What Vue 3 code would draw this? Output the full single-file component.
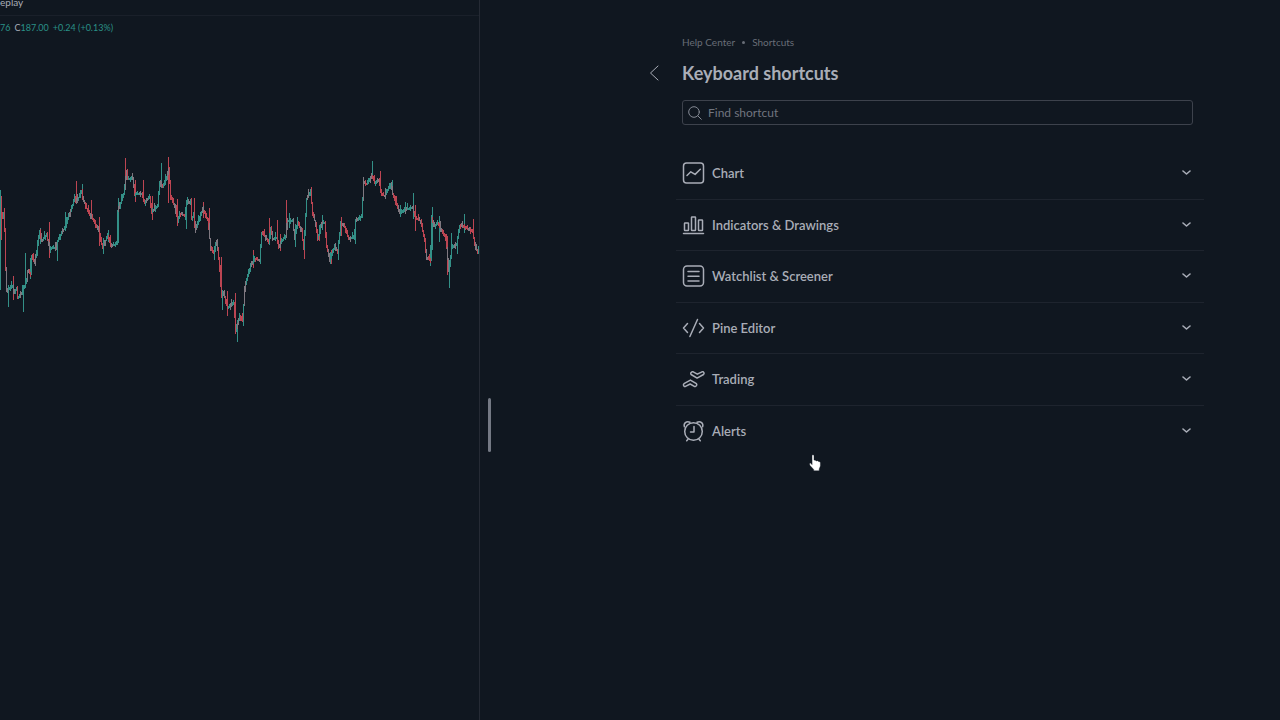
<script setup>
import { ref } from 'vue'

const query = ref('')

const sections = [
  { id: 'chart', label: 'Chart' },
  { id: 'indicators', label: 'Indicators & Drawings' },
  { id: 'watchlist', label: 'Watchlist & Screener' },
  { id: 'pine', label: 'Pine Editor' },
  { id: 'trading', label: 'Trading' },
  { id: 'alerts', label: 'Alerts' }
]

// Price path as x, y pairs
const path = [
  2,214, 3,217, 4,212, 5,230, 6,267, 7,290, 9,287, 13,285, 14,292, 17,288, 18,297, 22,292, 24,287, 27,280,
  28,270, 31,273, 32,256, 35,262, 37,250, 40,230, 42,240, 47,234, 50,248, 52,247, 56,247, 58,240, 63,230,
  66,226, 68,218, 73,204, 75,196, 77,201, 82,190, 83,198, 88,210, 93,218, 99,230, 103,247, 108,235, 112,245,
  117,243, 118,210, 124,193, 127,170, 128,178, 133,178, 135,193, 142,193, 145,202, 150,196, 152,211, 158,205,
  160,181, 163,186, 167,177, 169,168, 171,195, 175,205, 178,220, 180,213, 185,215, 187,202, 191,200, 192,218,
  194,213, 196,228, 200,217, 203,208, 208,219, 211,247, 214,252, 217,240, 219,257, 221,283, 222,296, 224,292,
  228,307, 234,302, 236,330, 240,315, 243,320, 245,287, 247,278, 251,264, 255,258, 260,260, 262,232, 267,238,
  269,242, 271,227, 273,238, 277,237, 279,246, 282,240, 286,235, 288,220, 293,220, 295,238, 298,222, 302,230,
  304,248, 307,198, 311,190, 313,213, 316,223, 318,238, 322,222, 325,222, 327,245, 330,260, 335,245, 338,252,
  341,222, 345,226, 349,238, 354,237, 356,220, 362,215, 364,182, 367,183, 372,175, 375,182, 379,179, 382,194,
  385,195, 391,183, 393,193, 400,212, 407,208, 413,207, 416,218, 421,220, 425,240, 427,258, 431,259, 432,217,
  434,225, 438,222, 442,230, 446,236, 449,270, 452,247, 457,243, 460,225, 467,227, 473,230, 475,243, 478,252
]

// Long wicks: x, high, low, rising
const wicks = [
  [0, 190, 290, 1], [1, 196, 240, 0], [4, 208, 230, 0], [8, 285, 307, 1], [13, 276, 300, 0], [23, 287, 312, 1], [25, 253, 287, 1],
  [30, 258, 279, 1], [37, 240, 256, 1], [40, 228, 244, 1], [49, 222, 258, 0], [57, 240, 261, 1], [65, 212, 231, 1],
  [76, 181, 203, 0], [82, 184, 200, 1], [91, 200, 219, 0], [99, 217, 246, 0], [103, 238, 254, 1], [108, 230, 242, 1],
  [118, 198, 243, 1], [125, 158, 183, 0], [135, 180, 202, 0], [143, 180, 202, 0], [152, 196, 220, 0],
  [161, 163, 188, 1], [168, 157, 203, 0], [177, 199, 226, 0], [186, 200, 229, 1], [194, 198, 228, 0],
  [203, 202, 218, 0], [209, 208, 225, 0], [214, 246, 260, 1], [221, 257, 296, 0], [222, 290, 310, 1],
  [227, 291, 316, 0], [235, 293, 325, 0], [237, 320, 342, 1], [243, 307, 326, 1], [253, 250, 268, 0],
  [260, 253, 262, 1], [269, 218, 245, 0], [277, 220, 241, 0], [280, 234, 251, 0], [286, 200, 237, 0],
  [289, 213, 228, 1], [295, 224, 247, 1], [304, 230, 259, 0], [311, 187, 200, 0], [319, 227, 241, 0],
  [322, 215, 230, 1], [331, 250, 264, 0], [338, 240, 260, 1], [341, 218, 236, 0], [355, 228, 244, 1],
  [372, 161, 179, 1], [380, 171, 190, 0], [392, 180, 188, 1], [400, 205, 217, 1], [405, 202, 213, 1],
  [413, 193, 219, 1], [415, 205, 231, 0], [430, 245, 266, 1], [432, 207, 250, 1], [439, 216, 242, 1],
  [447, 236, 275, 0], [449, 265, 288, 1], [451, 233, 259, 1], [457, 236, 254, 1], [464, 214, 233, 1],
  [473, 219, 238, 0], [478, 246, 254, 1]
]

const candles = []
for (let i = 0; i < path.length - 2; i += 2) {
  const [x0, y0, x1, y1] = path.slice(i, i + 4)
  for (let x = x0; x < x1; x++) {
    const from = y0 + ((y1 - y0) * (x - x0)) / (x1 - x0)
    const to = from + (y1 - y0) / (x1 - x0)
    const up = (x * 7) % 11 === 0 ? 5 : (x * 7) % 3
    const down = (x * 11) % 5 === 0 ? 4 : 2
    const mixed = (x * 13) % 7 < 2
    candles.push({
      x,
      y: Math.round(Math.min(from, to) - up),
      h: Math.max(2, Math.round(Math.abs(to - from) + up + down)),
      tone: mixed ? 'flat' : to <= from ? 'rise' : 'fall'
    })
  }
}
</script>

<template>
  <div class="page">
    <section class="chart-pane" aria-label="Price chart">
      <div class="toolbar"><button type="button" class="replay">eplay</button></div>
      <p class="quote">
        <span class="num">76</span>
        <span><span class="key">C</span><span class="num">187.00</span></span>
        <span class="num">+0.24 (+0.13%)</span>
      </p>
      <svg class="plot" width="479" height="200" viewBox="0 150 479 200" aria-hidden="true" shape-rendering="crispEdges">
        <rect v-for="w in wicks" :key="'w' + w[0]" :x="w[0]" :y="w[1]" width="1" :height="w[2] - w[1]" :class="w[3] ? 'rise' : 'fall'" />
        <rect v-for="c in candles" :key="c.x" :x="c.x" :y="c.y" width="1" :height="c.h" :class="c.tone" />
      </svg>
    </section>

    <div class="splitter" role="separator" aria-orientation="vertical"><span class="grip"></span></div>

    <main class="help">
      <nav class="crumbs" aria-label="Breadcrumb">
        <a href="#help">Help Center</a><span class="dot"></span><a href="#shortcuts">Shortcuts</a>
      </nav>
      <header class="heading">
        <button type="button" class="back" aria-label="Back">
          <svg width="10" height="16" viewBox="0 0 10 16"><path d="M9 1 1.500 8 9 15" /></svg>
        </button>
        <h1>Keyboard shortcuts</h1>
      </header>
      <label class="search">
        <svg width="14" height="14" viewBox="0 0 14 14" aria-hidden="true"><circle cx="6" cy="6" r="5.300" /><path d="m9.900 9.900 3.400 3.400" /></svg>
        <input v-model="query" type="text" placeholder="Find shortcut" aria-label="Find shortcut" />
      </label>

      <ul class="sections">
        <li v-for="s in sections" :key="s.id">
          <button type="button" class="row" aria-expanded="false">
            <svg class="icon" width="24" height="24" viewBox="0 0 24 24" aria-hidden="true">
              <template v-if="s.id === 'chart'">
                <rect x="1.500" y="2" width="20" height="20" rx="3" />
                <path d="m5 14.500 3.800-3.700 4.300 2.600 5.200-5.200" />
              </template>
              <template v-else-if="s.id === 'indicators'">
                <path d="M1.500 20.500h20" />
                <rect x="2.500" y="10" width="4" height="7.500" rx=".5" />
                <rect x="9.500" y="4" width="4" height="13.500" rx=".5" />
                <rect x="16.500" y="7" width="4" height="10.500" rx=".5" />
              </template>
              <template v-else-if="s.id === 'watchlist'">
                <rect x="1.500" y="2" width="20" height="20" rx="3.500" />
                <path d="M6 7.500h11M6 12.200h11M6 17h11" />
              </template>
              <template v-else-if="s.id === 'pine'">
                <path d="M5.500 7.500 1.500 12l4 4.500M17.500 7.500l4 4.500-4 4.500M15.500 3.500l-7.600 17" />
              </template>
              <template v-else-if="s.id === 'trading'">
                <path d="M10 4.800h1.200l4.100 2.400 4.700-2.400h1.200q1.600 1.400.3 2.700l-6.400 3.600-6-3.600q-1.100-1.500.9-2.700Z" />
                <path d="M13.500 19.400h-1.200l-4.100-2.400-4.700 2.400H2.300Q.7 18 2 16.700l6.400-3.600 6 3.600q1.100 1.500-.9 2.700Z" />
              </template>
              <template v-else>
                <circle cx="11.500" cy="12.500" r="8.800" />
                <path d="M12 7.500v5.500H8.500M6 20.200l-1.300 1.600M17 20.200l1.300 1.600M2.400 7.800C1.300 4.500 4.300 1.600 8 3.200M20.600 7.800C21.700 4.500 18.700 1.600 15 3.200" />
              </template>
            </svg>
            <span>{{ s.label }}</span>
            <svg class="chevron" width="10" height="6" viewBox="0 0 10 6" aria-hidden="true"><path d="m1 1 3.500 3L8 1" /></svg>
          </button>
        </li>
      </ul>

      <svg class="pointer" width="12" height="18" viewBox="0 0 12 18" aria-hidden="true">
        <path d="M3 1.500Q3 .7 3.900.7T5 1.600V6l1.300.2 1.100.7 1.200-.2 1 .9 1.100.1.700.9v3.500L10.200 15v1.800H4.700v-1.300L1 11.500.4 9.700l1-.6L3 10.500Z" />
      </svg>
    </main>
  </div>
</template>

<style>
body {
  background: #101720;
}
</style>

<style scoped>
.page {
  display: flex;
  min-height: 100vh;
  background: #101720;
  color: #a9adb7;
  font-family: "Trebuchet MS", Lato, sans-serif;
}
button {
  padding: 0;
  border: 0;
  background: none;
  color: inherit;
  font: inherit;
}
svg {
  flex: none;
  fill: none;
  stroke: currentColor;
  stroke-linecap: round;
  stroke-linejoin: round;
}
.chart-pane {
  box-sizing: border-box;
  width: 37.5%;
  overflow: hidden;
  border-right: 1px solid #252a34;
}
.toolbar {
  display: flex;
  height: 15px;
  border-bottom: 1px solid #1a202a;
}
.replay {
  height: 4px;
  font-size: 10px;
  line-height: 4px;
}
.quote {
  display: flex;
  gap: 4px;
  margin: 5px 0 0;
  font-size: 9px;
  line-height: 14px;
  white-space: nowrap;
}
.num {
  color: #2a9187;
}
.plot {
  display: block;
  margin-top: 115px;
  stroke: none;
}
.rise {
  fill: #339087;
}
.fall {
  fill: #bd4552;
}
.flat {
  fill: #7f7880;
}
.splitter {
  width: 18px;
  padding-top: 398px;
  box-sizing: border-box;
}
.grip {
  display: block;
  width: 3px;
  height: 54px;
  margin: 0 auto;
  border-radius: 2px;
  background: #747984;
}
.help {
  position: relative;
  flex: 1;
  padding: 35px 87px 0 184px;
}
.crumbs {
  display: flex;
  align-items: center;
  height: 14px;
  font-size: 10px;
  color: #686d77;
}
.crumbs a {
  color: inherit;
  text-decoration: none;
}
.dot {
  width: 3px;
  height: 3px;
  margin: 0 7px;
  border-radius: 50%;
  background: #686d77;
}
.heading {
  display: flex;
  align-items: center;
  height: 28px;
  margin: 10px 0 13px -33px;
}
.back {
  display: flex;
  width: 33px;
}
h1 {
  margin: 0;
  font-size: 18px;
  font-weight: 700;
  line-height: 24px;
}
.search {
  display: flex;
  align-items: center;
  gap: 6px;
  height: 23px;
  padding: 0 5px;
  border: 1px solid #3d424c;
  border-radius: 3px;
}
.search svg {
  color: #858a94;
}
.search input {
  flex: 1;
  min-width: 0;
  padding: 0;
  border: 0;
  outline: 0;
  background: none;
  color: #a9adb7;
  font: inherit;
  font-size: 12px;
}
.search input::placeholder {
  color: #70757f;
  opacity: 1;
}
.sections {
  display: grid;
  grid-auto-rows: 1fr;
  height: 309px;
  margin: 23px -11px 0 -6px;
  padding: 0;
  list-style: none;
}
.sections li {
  display: flex;
  border-bottom: 1px solid #1e242e;
}
.sections li:last-child {
  border-color: transparent;
}
.row {
  display: flex;
  flex: 1;
  align-items: center;
  gap: 6px;
  padding: 0 12px 0 6px;
  font-size: 13px;
  font-weight: 600;
  text-align: left;
}
.icon {
  stroke-width: 1.5;
}
.chevron {
  margin-left: auto;
  stroke-width: 1.6;
}
.pointer {
  position: absolute;
  top: 454px;
  left: 311px;
  fill: #fff;
  stroke: #101720;
  stroke-width: 0.4;
}
</style>
